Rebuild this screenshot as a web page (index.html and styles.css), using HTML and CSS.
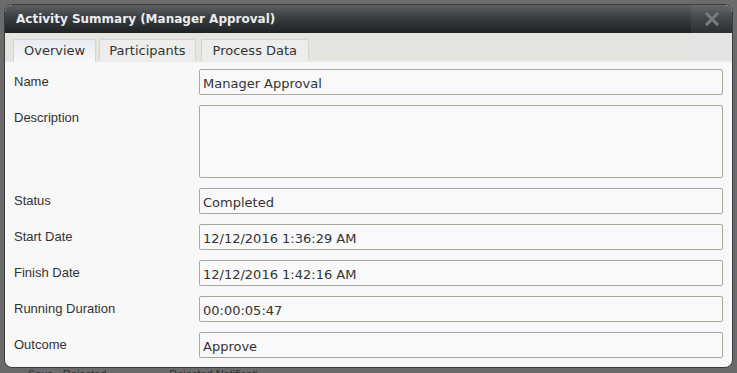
FILE: index.html
```html
<!DOCTYPE html>
<html>
<head>
<meta charset="utf-8">
<link rel="stylesheet" href="styles.css">
</head>
<body>
<div class="dialog">
  <div class="titlebar">
    <span class="title">Activity Summary (Manager Approval)</span>
    <span class="close"><svg width="14" height="14" viewBox="0 0 14 14"><path d="M2 2 L12 12 M12 2 L2 12" stroke="#7b7b7b" stroke-width="3" stroke-linecap="square"/></svg></span>
  </div>
  <div class="tabs">
    <div class="tab active">Overview</div>
    <div class="tab">Participants</div>
    <div class="tab last">Process Data</div>
  </div>
  <div class="content">
    <label class="lbl">Name</label><div class="field">Manager Approval</div>
    <label class="lbl">Description</label><div class="field area"></div>
    <label class="lbl">Status</label><div class="field">Completed</div>
    <label class="lbl">Start Date</label><div class="field">12/12/2016 1:36:29 AM</div>
    <label class="lbl">Finish Date</label><div class="field">12/12/2016 1:42:16 AM</div>
    <label class="lbl">Running Duration</label><div class="field">00:00:05:47</div>
    <label class="lbl">Outcome</label><div class="field">Approve</div>
  </div>
</div>
<div class="behind"><span class="b1">Save - Rejected</span><span class="b2">Rejected Notificati</span></div>
</body>
</html>
```
FILE: styles.css
```css
html, body {
  margin: 0;
  height: 373px;
  overflow: hidden;
}
body {
  background: #6b6b6b;
  padding: 4px 4px 0 4px;
  box-sizing: border-box;
  width: 737px;
}
.dialog {
  width: 729px;
  border: 1px solid #3c3c3c;
  border-radius: 8px;
  overflow: hidden;
  background: #f8f8f8;
  box-sizing: border-box;
}
.titlebar {
  height: 28px;
  background: linear-gradient(#5c6063, #3a3e41 45%, #1f2225);
  display: flex;
  align-items: center;
  justify-content: space-between;
  padding-left: 11px;
}
.title {
  font-family: "DejaVu Sans", Verdana, sans-serif;
  font-weight: bold;
  font-size: 12px;
  color: #ececec;
}
.close {
  width: 41px;
  height: 28px;
  display: flex;
  align-items: center;
  justify-content: center;
  background: rgba(255,255,255,0.06);
}
.tabs {
  height: 29px;
  box-sizing: border-box;
  background: linear-gradient(to right, #e4e5df calc(100% - 41px), #e4e4e4 0);
  display: flex;
  align-items: flex-end;
  gap: 3px;
  padding-left: 8px;
  border-bottom: 1px solid #ececec;
}
.tab {
  height: 22px;
  box-sizing: border-box;
  padding: 0 9px;
  font-family: "DejaVu Sans", Verdana, sans-serif;
  font-size: 13px;
  color: #333;
  line-height: 21px;
  background: #ededeb;
  border: 1px solid #d4d4d0;
  border-bottom: none;
  border-radius: 2px 2px 0 0;
}
.tab.active {
  background: linear-gradient(#e8ebf2, #f8f8f8);
  padding: 0 10px;
  height: 23px;
  margin-bottom: -1px;
}
.tab.last {
  margin-left: 2px;
  padding: 0 11px;
}
.content {
  display: grid;
  grid-template-columns: 185px 524px;
  row-gap: 10px;
  padding: 7px 0 9px 9px;
}
.lbl {
  font-family: "Liberation Sans", Arial, sans-serif;
  font-size: 13px;
  color: #333;
  padding-top: 5px;
  line-height: 15px;
}
.field {
  height: 26px;
  box-sizing: border-box;
  border: 1px solid #a9ab9a;
  border-radius: 2px;
  background: #f9f9f9;
  font-family: "DejaVu Sans", Verdana, sans-serif;
  font-size: 13px;
  color: #333;
  line-height: 22px;
  padding: 3px 3px 0;
}
.field.area {
  height: 73px;
}
.behind {
  font-family: "Liberation Sans", Arial, sans-serif;
  font-size: 11px;
  line-height: 13px;
  color: #2a2a2a;
  margin-top: 0;
  padding-left: 24px;
  display: flex;
}
.b2 { margin-left: 63px; }
```
